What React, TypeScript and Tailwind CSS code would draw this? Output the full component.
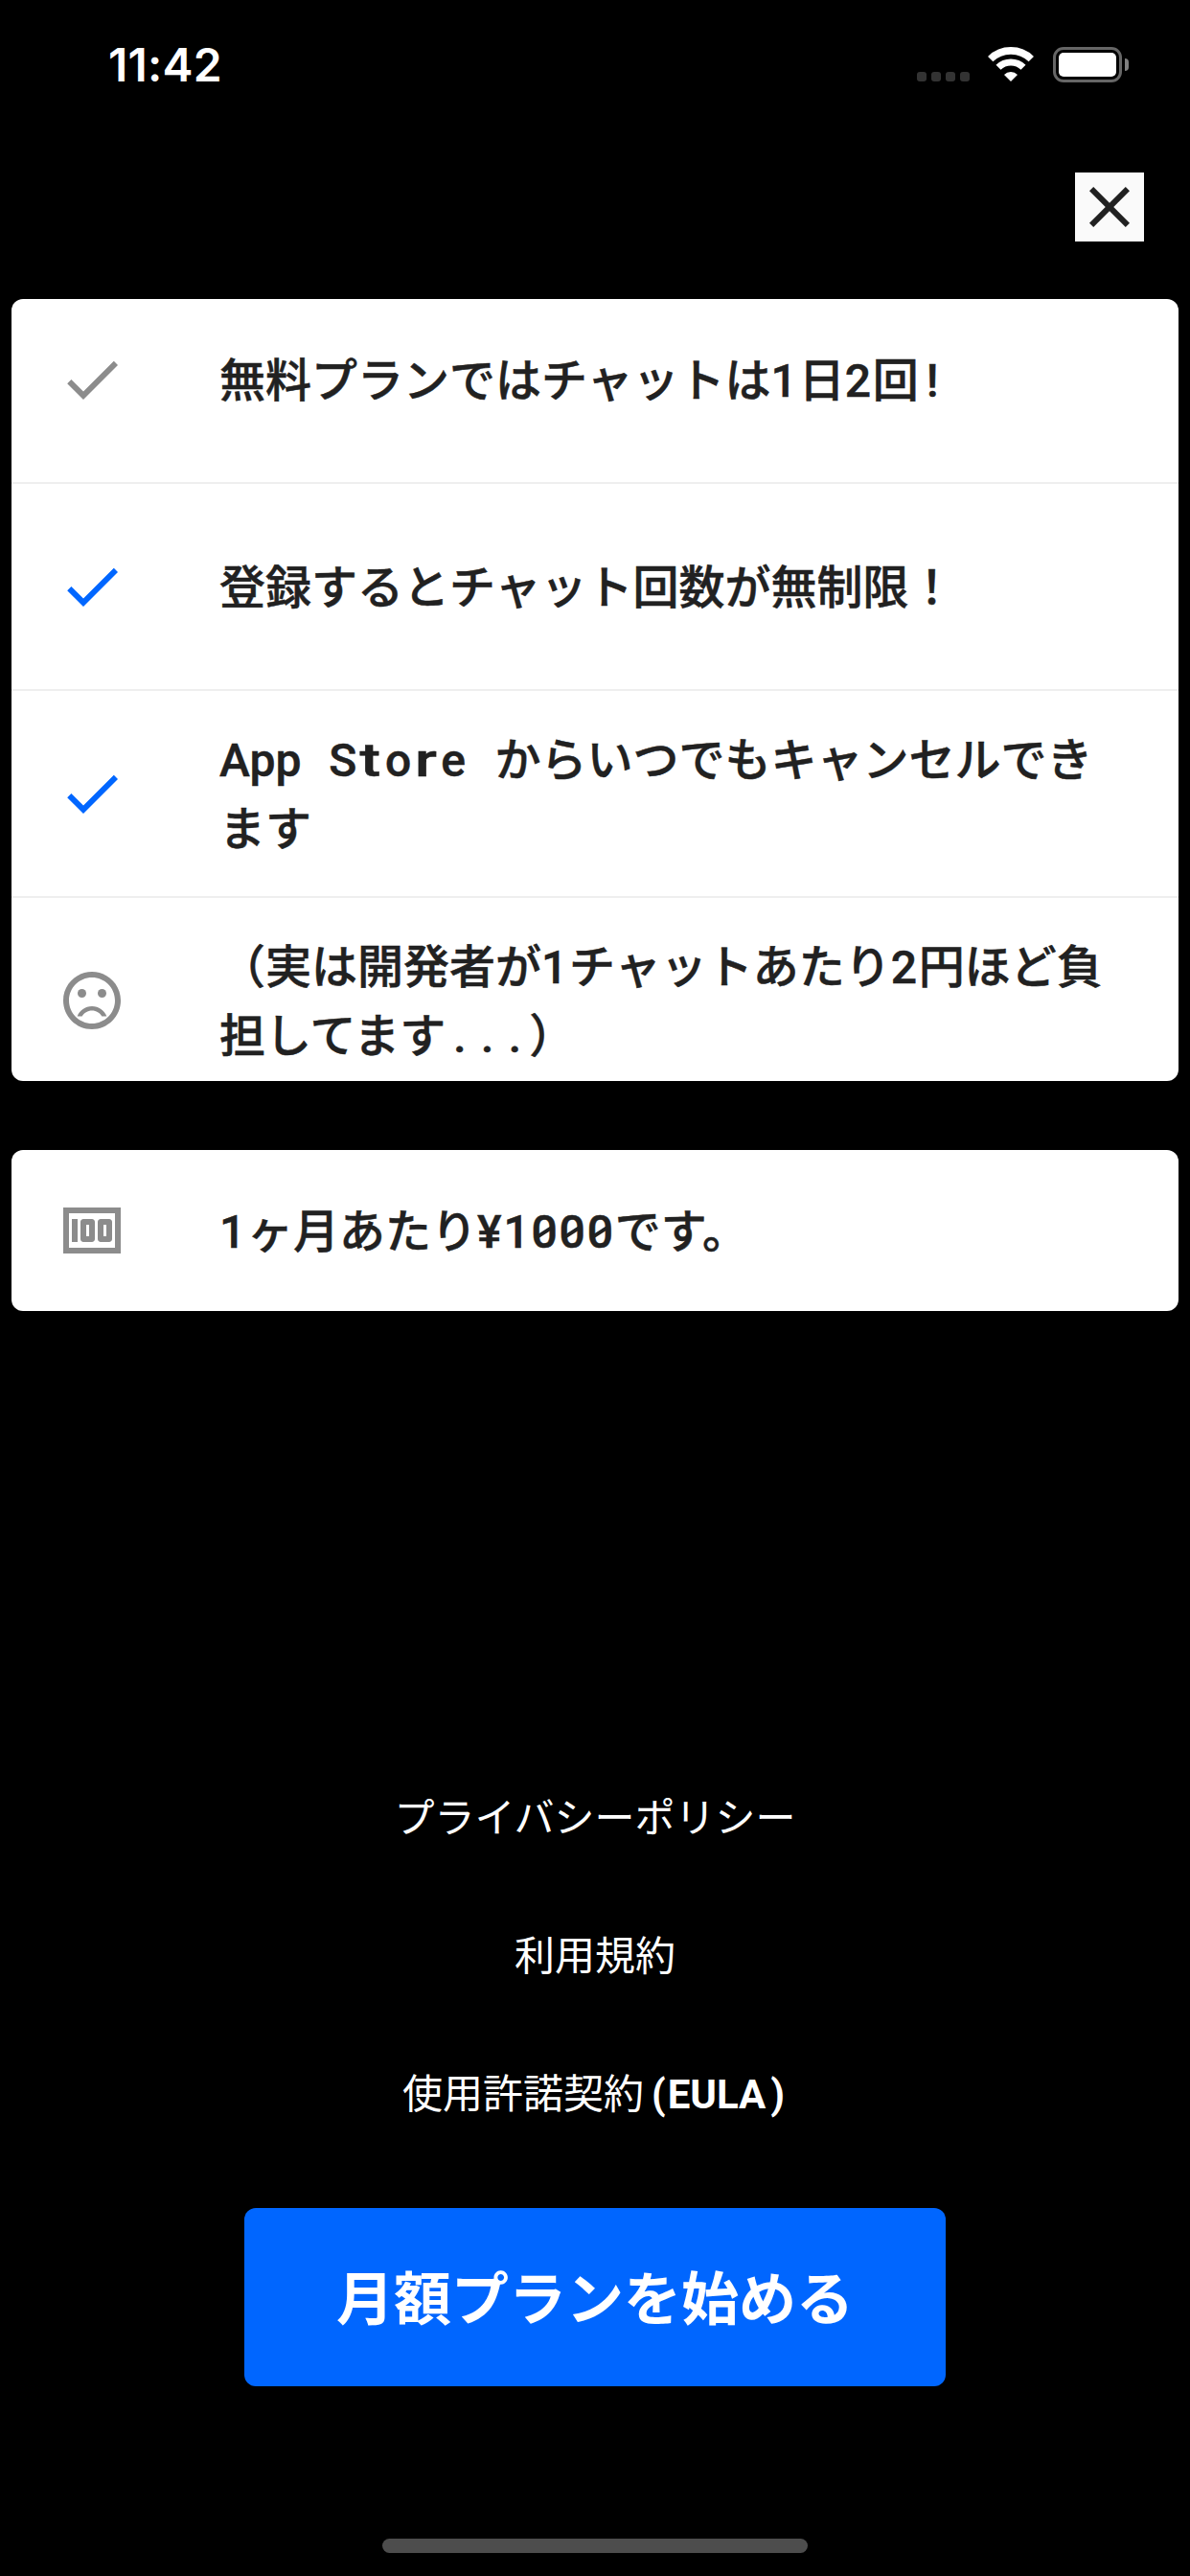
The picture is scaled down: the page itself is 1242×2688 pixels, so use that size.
import type { ReactNode } from "react";
import { MdClose, MdDone, MdMoney } from "react-icons/md";

function Mono({ children, className = "" }: { children: ReactNode; className?: string }) {
  return <span className={`font-['Roboto'] leading-none ${className}`}>{children}</span>;
}

/** One character widened to fill its fixed-width cell. */
function Wide({ children }: { children: ReactNode }) {
  return <span className="inline-block w-[28.8px] scale-x-[1.35] text-center leading-none">{children}</span>;
}

/** Three zeros with a slash inside each counter. */
function SlashedZeros() {
  return (
    <span className="relative font-['Roboto'] leading-none tracking-[1.8px]">
      000
      <span className="absolute inset-0 flex items-center">
        <i className="mr-[10.8px] ml-[4.5px] h-[4px] w-[18px] -rotate-[33deg] bg-[#212121]" />
        <i className="mr-[10.8px] h-[4px] w-[18px] -rotate-[33deg] bg-[#212121]" />
        <i className="h-[4px] w-[18px] -rotate-[33deg] bg-[#212121]" />
      </span>
    </span>
  );
}

function SadFace() {
  return (
    <svg viewBox="0 0 24 24" className="size-[72px]" fill="currentColor">
      <circle cx="15.5" cy="9.5" r="1.5" />
      <circle cx="8.5" cy="9.5" r="1.5" />
      <path d="M12 14c-2.33 0-4.32 1.45-5.12 3.5h1.67c.69-1.19 1.97-2 3.45-2s2.75.81 3.45 2h1.67c-.8-2.05-2.79-3.5-5.12-3.5z" />
      <path d="M11.99 2C6.47 2 2 6.48 2 12s4.47 10 9.99 10C17.52 22 22 17.52 22 12S17.52 2 11.99 2zM12 20c-4.42 0-8-3.58-8-8s3.58-8 8-8 8 3.58 8 8-3.58 8-8 8z" />
    </svg>
  );
}

function StatusBar() {
  return (
    <header className="flex h-[132px] items-start justify-between pr-[64px] pl-[113px]">
      <div className="mt-[38px] font-['Inter'] text-[48px] leading-[60px] font-semibold tracking-[0.2px] text-white">
        11:42
      </div>
      <div className="mt-[49px] flex h-[37px] items-start">
        <div className="mt-[26px] mr-[19px] flex gap-[5px]">
          <i className="size-[10px] rounded-[3px] bg-[#333]" />
          <i className="size-[10px] rounded-[3px] bg-[#333]" />
          <i className="size-[10px] rounded-[3px] bg-[#333]" />
          <i className="size-[10px] rounded-[3px] bg-[#333]" />
        </div>
        <svg viewBox="0 0 48 36" className="mr-5 h-9 w-12" fill="none" stroke="#fff">
          <path d="M2.7 12.6a30.4 30.4 0 0 1 42.6 0" strokeWidth="7.6" />
          <path d="M11 21.3a18.6 18.6 0 0 1 26 0" strokeWidth="7.2" />
          <path d="M24 36l-7-7.1a9.9 9.9 0 0 1 14 0z" fill="#fff" stroke="none" />
        </svg>
        <div className="h-[37px] w-[72px] rounded-[11px] border-[3px] border-[#666] p-[3px]">
          <div className="h-[25px] w-[60px] rounded-[5px] bg-white" />
        </div>
        <div className="mt-[12px] ml-[3px] h-[13px] w-[4px] rounded-r-full bg-[#808080]" />
      </div>
    </header>
  );
}

function Row({ icon, tone, children }: { icon: ReactNode; tone: string; children: ReactNode }) {
  return (
    <li className="flex h-[216px] shrink-0 items-center px-12 not-last:shadow-[0_1px_0_#eee,inset_0_-1px_0_#eee]">
      <span className={`mr-[97px] flex size-[72px] shrink-0 ${tone}`}>{icon}</span>
      <p className="pb-1.5 text-[48px] leading-[72px] font-medium whitespace-nowrap text-[#212121] [-webkit-text-stroke:0.5px_#212121]">
        {children}
      </p>
    </li>
  );
}

export default function App() {
  return (
    <div className="flex h-[2688px] w-[1242px] flex-col bg-black font-['Noto_Sans_CJK_JP',sans-serif]">
      <StatusBar />
      <div className="mt-12 flex justify-end pr-12">
        <button className="flex size-[72px] items-center justify-center bg-[#fafafa] text-[#212121]">
          <MdClose className="size-[72px]" />
        </button>
      </div>

      <section className="mx-3 mt-[60px] flex h-[816px] flex-col justify-center overflow-hidden rounded-[12px] bg-white">
        <ul className="shrink-0">
          <Row tone="text-[#8c8c8c]" icon={<MdDone className="size-[72px]" />}>
            無料プランではチャットは<Mono className="tracking-[1.8px]">1</Mono>日
            <Mono className="tracking-[1.8px]">2</Mono>回<Mono className="pl-[8px]">!</Mono>
          </Row>
          <Row tone="text-[#0066ff]" icon={<MdDone className="size-[72px]" />}>
            登録するとチャット回数が無制限！
          </Row>
          <Row tone="text-[#0066ff]" icon={<MdDone className="size-[72px]" />}>
            <Mono className="[word-spacing:17px]">App </Mono>
            <Mono className="[word-spacing:17px]">
              S<Wide>t</Wide>
              <span className="px-[0.8px]">o</span>
              <Wide>r</Wide>
              <span className="px-[1.5px]">e</span>{" "}
            </Mono>
            からいつでもキャンセルでき
            <br />
            ます
          </Row>
          <Row tone="text-[#8c8c8c]" icon={<SadFace />}>
            （実は開発者が<Mono className="tracking-[1.8px]">1</Mono>チャットあたり
            <Mono className="tracking-[1.8px]">2</Mono>円ほど負
            <br />
            担してます<Mono className="pl-[8px] tracking-[15.5px]">..</Mono>
            <Mono className="pr-[8px]">.</Mono>）
          </Row>
        </ul>
      </section>

      <ul className="mx-3 mt-[72px] flex h-[168px] flex-col justify-center rounded-[12px] bg-white">
        <Row tone="text-[#8c8c8c]" icon={<MdMoney className="size-[72px]" />}>
          <Mono className="tracking-[1.8px]">1</Mono>ヶ月あたり
          <Mono className="tracking-[1.8px]">¥1</Mono>
          <SlashedZeros />
          です。
        </Row>
      </ul>

      <nav className="mt-[454px] flex flex-col text-center text-[42px] leading-[144px] text-white">
        <a className="h-36">プライバシーポリシー</a>
        <a className="h-36">利用規約</a>
        <a className="h-36">
          使用許諾契約
          <Mono className="font-bold">
            <span className="pl-[8px] tracking-[2px]">(</span>EULA<span className="pr-[3px] pl-[5px]">)</span>
          </Mono>
        </a>
      </nav>

      <button className="mx-auto mt-[50px] flex h-[186px] w-[732px] items-center justify-center rounded-[12px] bg-[#0066ff] pb-1 text-[60px] leading-[90px] font-bold text-white">
        月額プランを始める
      </button>
      <div className="mx-auto mt-auto mb-6 h-[15px] w-[444px] rounded-full bg-[#4d4d4d]" />
    </div>
  );
}
